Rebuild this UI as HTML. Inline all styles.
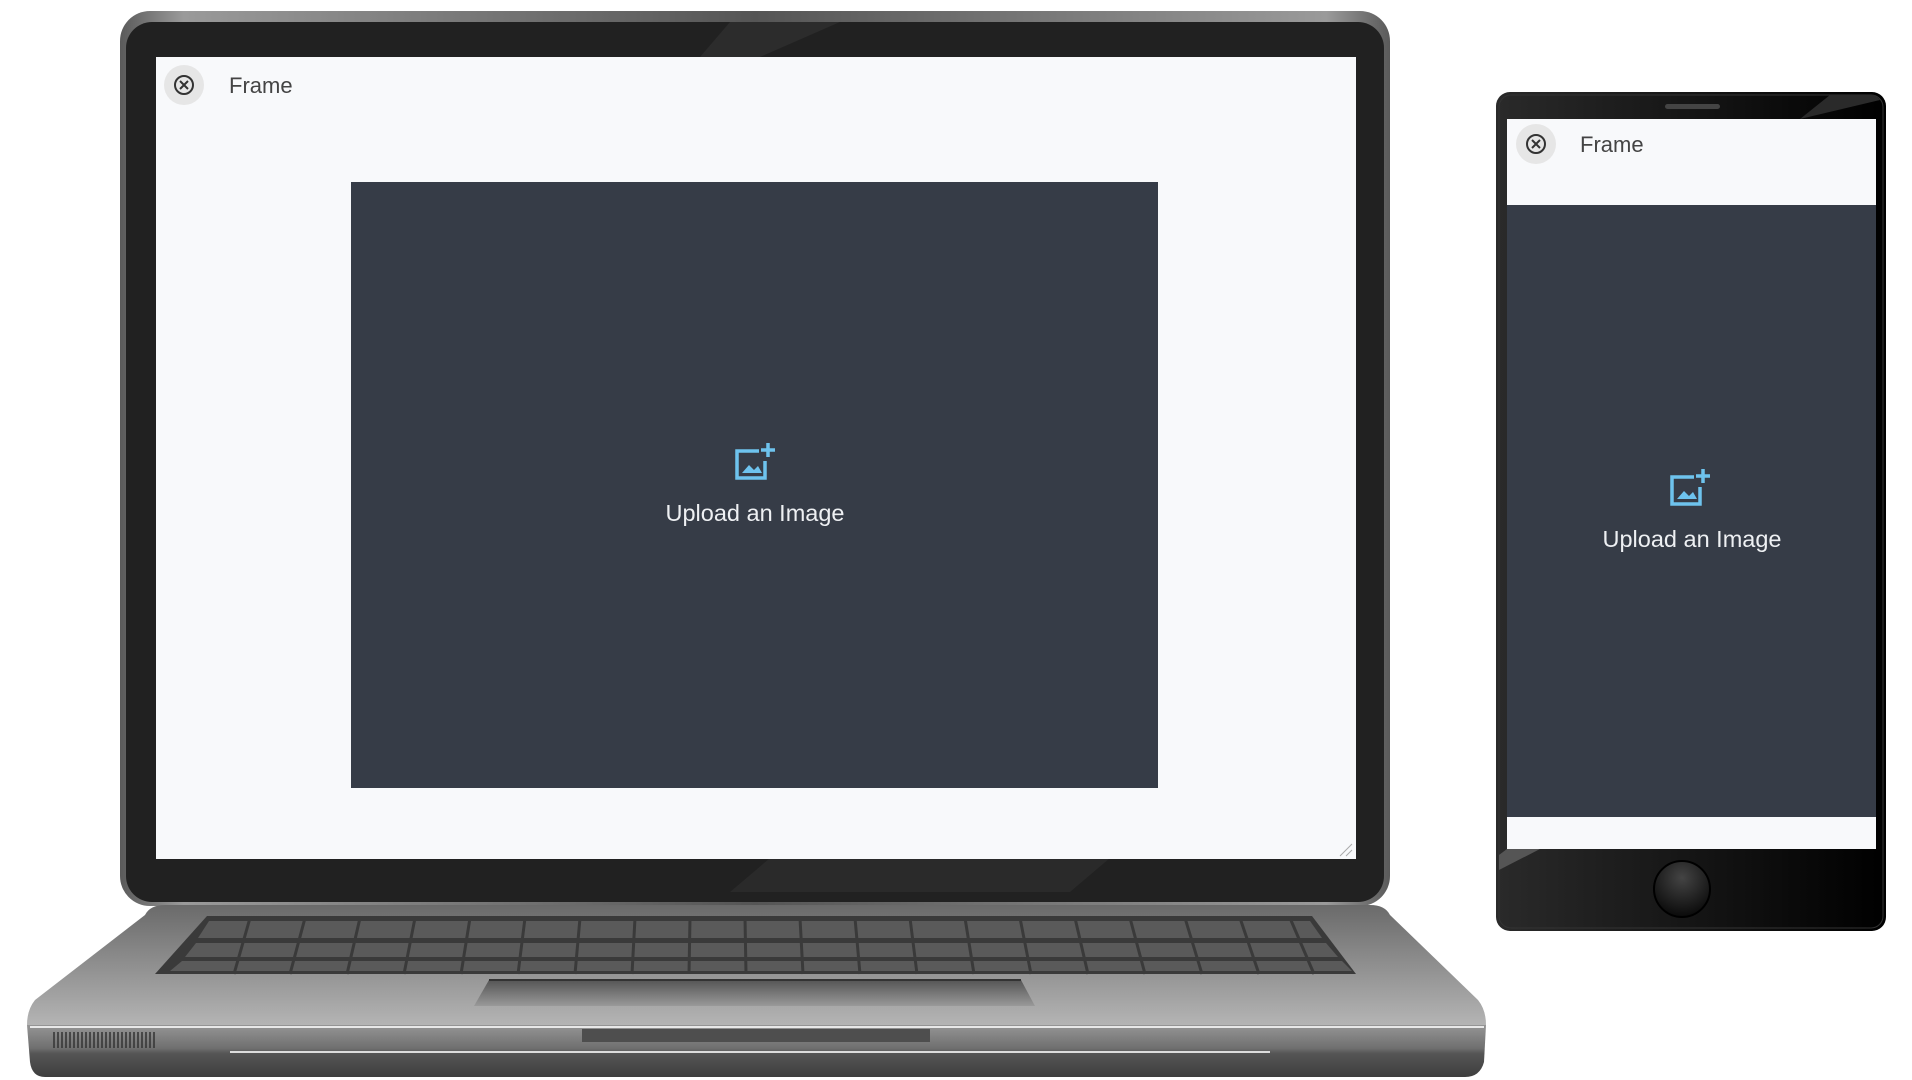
<!DOCTYPE html>
<html><head><meta charset="utf-8"><style>
html,body{margin:0;padding:0;background:#fff;width:1912px;height:1080px;overflow:hidden}
svg{display:block}
text{font-family:"Liberation Sans",sans-serif}
</style></head><body>
<svg width="1912" height="1080" viewBox="0 0 1912 1080" xmlns="http://www.w3.org/2000/svg">
<defs>
<linearGradient id="lidEdge" x1="0" y1="0" x2="1" y2="0">
<stop offset="0" stop-color="#5a5a5a"/><stop offset="0.05" stop-color="#9a9a9a"/><stop offset="0.5" stop-color="#555"/><stop offset="0.95" stop-color="#9a9a9a"/><stop offset="1" stop-color="#5a5a5a"/>
</linearGradient>
<linearGradient id="deck" x1="0" y1="0" x2="0" y2="1">
<stop offset="0" stop-color="#6a6a6a"/><stop offset="1" stop-color="#b4b4b4"/>
</linearGradient>
<linearGradient id="front" x1="0" y1="0" x2="0" y2="1">
<stop offset="0" stop-color="#959595"/><stop offset="0.45" stop-color="#6f6f6f"/><stop offset="0.55" stop-color="#555"/><stop offset="1" stop-color="#3e3e3e"/>
</linearGradient>
<linearGradient id="pad" x1="0" y1="0" x2="0" y2="1">
<stop offset="0" stop-color="#555"/><stop offset="1" stop-color="#999"/>
</linearGradient>
<linearGradient id="phone" x1="0" y1="0" x2="1" y2="0">
<stop offset="0" stop-color="#2a2a2a"/><stop offset="0.6" stop-color="#111"/><stop offset="1" stop-color="#000"/>
</linearGradient>
<radialGradient id="btn" cx="0.5" cy="0.3" r="0.7">
<stop offset="0" stop-color="#444"/><stop offset="1" stop-color="#0a0a0a"/>
</radialGradient>
</defs>

<rect x="120" y="11" width="1270" height="895" rx="30" fill="url(#lidEdge)"/>
<rect x="126" y="22" width="1258" height="880" rx="26" fill="#212121"/>
<polygon points="730,22 840,22 760,57 700,57" fill="#2c2c2c"/>
<polygon points="730,892 1070,892 1110,858 770,858" fill="#2a2a2a"/>
<rect x="156" y="57" width="1200" height="802" fill="#f8f9fb"/>
<circle cx="184" cy="85" r="20" fill="#e6e6e6"/>
<circle cx="184" cy="85" r="9" fill="none" stroke="#333" stroke-width="2"/>
<path d="M180 81 L188 89 M188 81 L180 89" stroke="#333" stroke-width="2"/>
<text x="229" y="93" font-size="22" fill="#444">Frame</text>
<rect x="351" y="182" width="807" height="606" fill="#363c47"/>
<g transform="translate(735,443)" fill="none" stroke="#6ec3ee" stroke-width="3.5">
<path d="M24 8 H2 V35 H30 V18"/>
<path d="M33 0 V14 M26 7 H40"/>
<path d="M7 30 L14 22 L19 27 L23 23 L27 30 Z" fill="#6ec3ee" stroke="none"/>
</g>
<text x="755" y="521" font-size="23.5" fill="#eef0f3" text-anchor="middle">Upload an Image</text>
<path d="M1340 856 L1352 844 M1346 856 L1352 850" stroke="#aaa" stroke-width="1"/>

<path d="M165 905 H1370 Q1385 905 1390 915 L1478 1000 Q1486 1010 1486 1025 L1486 1025 H27 Q27 1010 35 1000 L145 915 Q150 905 165 905 Z" fill="url(#deck)"/>
<path d="M27 1025 H1486 L1484 1062 Q1480 1077 1465 1077 H45 Q32 1077 30 1062 Z" fill="url(#front)"/>
<line x1="30" y1="1027" x2="1484" y2="1027" stroke="#e8e8e8" stroke-width="2"/>
<line x1="230" y1="1052" x2="1270" y2="1052" stroke="#ddd" stroke-width="2"/>
<rect x="582" y="1029" width="348" height="13" fill="#4e4e4e"/>
<g stroke="#333" stroke-width="1.5">
<path d="M54 1032V1048 M58 1032V1048 M62 1032V1048 M66 1032V1048 M70 1032V1048 M74 1032V1048 M78 1032V1048 M82 1032V1048 M86 1032V1048 M90 1032V1048 M94 1032V1048 M98 1032V1048 M102 1032V1048 M106 1032V1048 M110 1032V1048 M114 1032V1048 M118 1032V1048 M122 1032V1048 M126 1032V1048 M130 1032V1048 M134 1032V1048 M138 1032V1048 M142 1032V1048 M146 1032V1048 M150 1032V1048 M154 1032V1048"/>
</g>
<polygon points="207,916 1312,916 1356,974 155,974" fill="#3a3a3a"/>
<g fill="#5a5a5a">
<polygon points="209,921 1310,921 1322,938 198,938"/>
<polygon points="196,943 1326,943 1338,957 185,957"/>
<polygon points="182,961 1342,961 1352,971 170,971"/>
</g>
<g stroke="#3a3a3a" stroke-width="3">
<path d="M250 918 L234 974 M305 918 L290 974 M360 918 L347 974 M415 918 L404 974 M470 918 L461 974 M525 918 L518 974 M580 918 L575 974 M635 918 L632 974 M690 918 L689 974 M745 918 L746 974 M800 918 L803 974 M855 918 L860 974 M910 918 L917 974 M965 918 L974 974 M1020 918 L1031 974 M1075 918 L1088 974 M1130 918 L1145 974 M1185 918 L1202 974 M1240 918 L1259 974 M1290 918 L1314 974"/>
</g>
<polygon points="489,980 1021,980 1035,1006 474,1006" fill="url(#pad)"/>
<line x1="489" y1="980" x2="1021" y2="980" stroke="#333" stroke-width="2"/>

<rect x="1496" y="92" width="390" height="839" rx="14" fill="url(#phone)"/>
<rect x="1499" y="95" width="384" height="833" rx="12" fill="none" stroke="#333" stroke-width="1"/>
<rect x="1665" y="104" width="55" height="5" rx="2.5" fill="#444"/>
<polygon points="1830,95 1875,95 1880,100 1800,119 " fill="#2a2a2a"/>
<rect x="1507" y="119" width="369" height="730" fill="#f8f9fb"/>
<rect x="1507" y="205" width="369" height="612" fill="#363c47"/>
<circle cx="1536" cy="144" r="20" fill="#e6e6e6"/>
<circle cx="1536" cy="144" r="9" fill="none" stroke="#333" stroke-width="2"/>
<path d="M1532 140 L1540 148 M1540 140 L1532 148" stroke="#333" stroke-width="2"/>
<text x="1580" y="152" font-size="22" fill="#444">Frame</text>
<g transform="translate(1670,469)" fill="none" stroke="#6ec3ee" stroke-width="3.5">
<path d="M24 8 H2 V35 H30 V18"/>
<path d="M33 0 V14 M26 7 H40"/>
<path d="M7 30 L14 22 L19 27 L23 23 L27 30 Z" fill="#6ec3ee" stroke="none"/>
</g>
<text x="1692" y="547" font-size="23.5" fill="#eef0f3" text-anchor="middle">Upload an Image</text>
<polygon points="1499,870 1540,849 1507,849 1499,855" fill="#555"/>
<circle cx="1682" cy="889" r="28" fill="url(#btn)" stroke="#000" stroke-width="2"/>
</svg>
</body></html>
